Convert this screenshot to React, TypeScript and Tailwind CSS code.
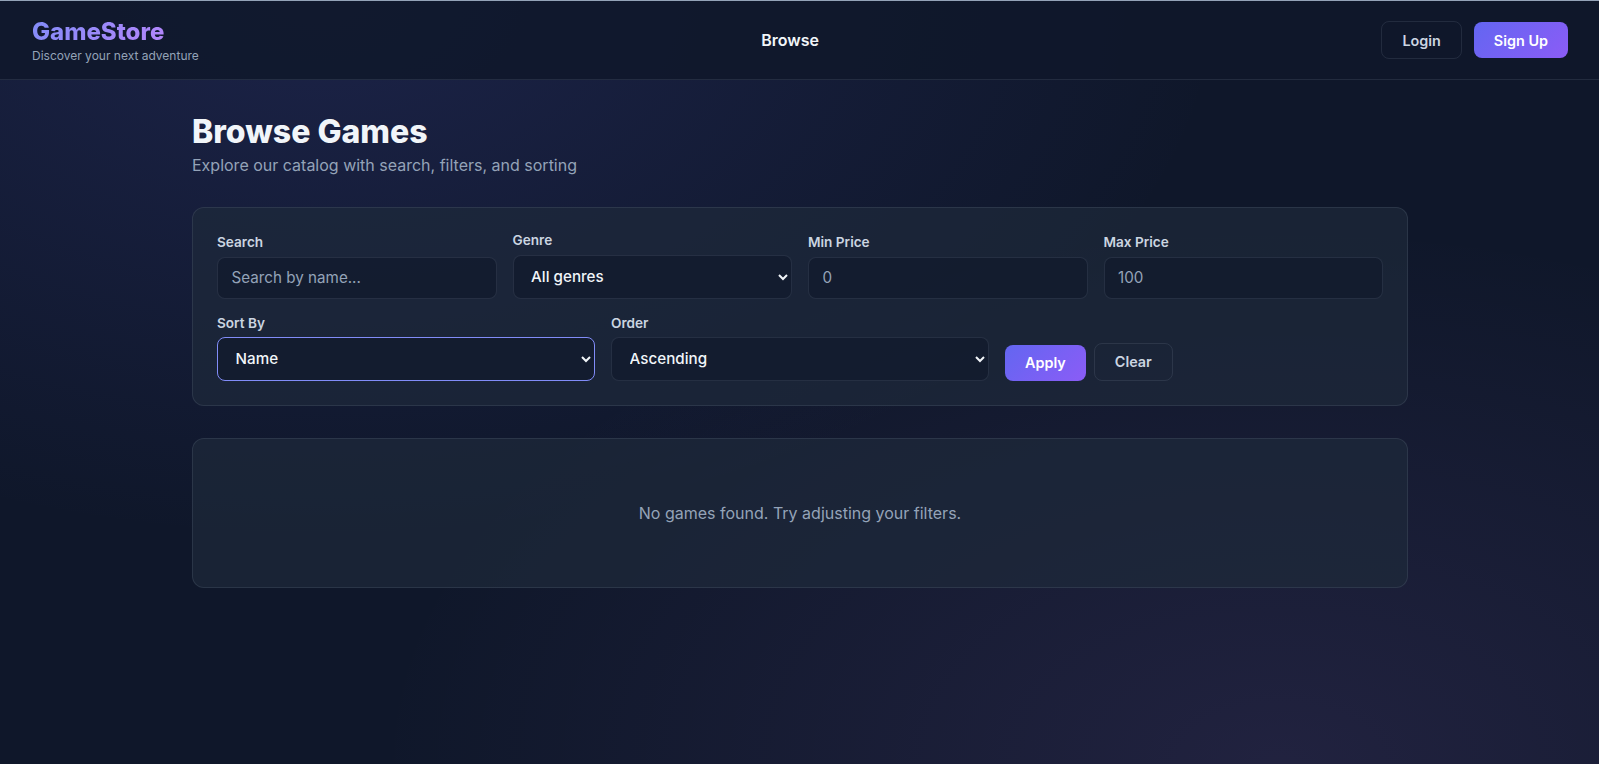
import type { ReactNode } from "react";

const controlBase =
  "w-full rounded-lg border bg-[#0f172a]/60 px-[13.6px] text-[15.2px] outline-none";

function Field({ label, children }: { label: string; children: ReactNode }) {
  return (
    <label className="flex flex-col gap-1.5">
      <span className="text-[13.6px] leading-[16.5px] font-semibold text-[#cbd5e1]">{label}</span>
      {children}
    </label>
  );
}

function TextInput({ placeholder, type = "text" }: { placeholder: string; type?: string }) {
  return (
    <input
      type={type}
      placeholder={placeholder}
      className={`${controlBase} h-[42px] border-[#94a3b8]/15 text-[#f1f5f9] placeholder:text-[#94a3b8]`}
    />
  );
}

function Select({
  options,
  active = false,
  className = "",
}: {
  options: string[];
  active?: boolean;
  className?: string;
}) {
  return (
    <select
      className={`${controlBase} h-[44px] font-medium text-[#f1f5f9] ${
        active ? "border-[#818cf8]" : "border-[#94a3b8]/15"
      } ${className}`}
    >
      {options.map((option) => (
        <option key={option}>{option}</option>
      ))}
    </select>
  );
}

function PrimaryButton({ children, className = "" }: { children: ReactNode; className?: string }) {
  return (
    <button
      className={`h-9 rounded-lg bg-[linear-gradient(135deg,#6366f1,#8b5cf6)] px-5 text-[14.4px] font-semibold text-white ${className}`}
    >
      {children}
    </button>
  );
}

function OutlineButton({ children, className = "" }: { children: ReactNode; className?: string }) {
  return (
    <button
      className={`h-[38px] rounded-lg border border-[#94a3b8]/15 px-5 text-[14.4px] font-semibold text-[#cbd5e1] ${className}`}
    >
      {children}
    </button>
  );
}

export default function App() {
  return (
    <div className="h-[764px] overflow-hidden">
      <div className="flex h-full w-[1600px] flex-col bg-[#0f172a] bg-[radial-gradient(ellipse_at_20%_0%,rgba(99,102,241,0.15)_0%,transparent_50%),radial-gradient(ellipse_at_80%_100%,rgba(192,132,252,0.1)_0%,transparent_50%)] font-['Inter',sans-serif] text-[#f1f5f9]">
        <header className="flex h-20 items-center justify-between border-t border-b border-t-[#94a3b8] border-b-[#94a3b8]/15 bg-[#0f172a]/85 px-8">
          <div className="flex flex-col gap-0.5">
            <span className="bg-[linear-gradient(135deg,#818cf8,#c084fc)] bg-clip-text text-2xl leading-[29px] font-extrabold text-transparent">
              GameStore
            </span>
            <span className="text-xs leading-[16px] text-[#94a3b8]">Discover your next adventure</span>
          </div>
          <nav className="text-base font-semibold">Browse</nav>
          <div className="flex items-center gap-3">
            <OutlineButton className="pt-px">Login</OutlineButton>
            <PrimaryButton className="pt-px">Sign Up</PrimaryButton>
          </div>
        </header>

        <main className="mx-auto w-[1216px] pt-8">
          <h1 className="text-[32px] leading-[39px] font-extrabold">Browse Games</h1>
          <p className="mt-1 text-base leading-5 text-[#94a3b8]">
            Explore our catalog with search, filters, and sorting
          </p>

          <section className="mt-8 flex flex-col gap-4 rounded-xl border border-[#94a3b8]/15 bg-[#1e293b]/70 p-6">
            <div className="grid grid-cols-4 items-end gap-4">
              <Field label="Search">
                <TextInput placeholder="Search by name..." />
              </Field>
              <Field label="Genre">
                <Select options={["All genres"]} />
              </Field>
              <Field label="Min Price">
                <TextInput placeholder="0" />
              </Field>
              <Field label="Max Price">
                <TextInput placeholder="100" />
              </Field>
            </div>
            <div className="grid grid-cols-3 items-end gap-4">
              <Field label="Sort By">
                <Select options={["Name", "Price"]} active className="pb-px" />
              </Field>
              <Field label="Order">
                <Select options={["Ascending", "Descending"]} className="pb-px" />
              </Field>
              <div className="flex items-end gap-2">
                <PrimaryButton>Apply</PrimaryButton>
                <OutlineButton>Clear</OutlineButton>
              </div>
            </div>
          </section>

          <section className="mt-8 flex h-[150px] items-center justify-center rounded-xl border border-[#94a3b8]/15 bg-[#1e293b]/70">
            <p className="text-base text-[#94a3b8]">No games found. Try adjusting your filters.</p>
          </section>
        </main>
      </div>
    </div>
  );
}
